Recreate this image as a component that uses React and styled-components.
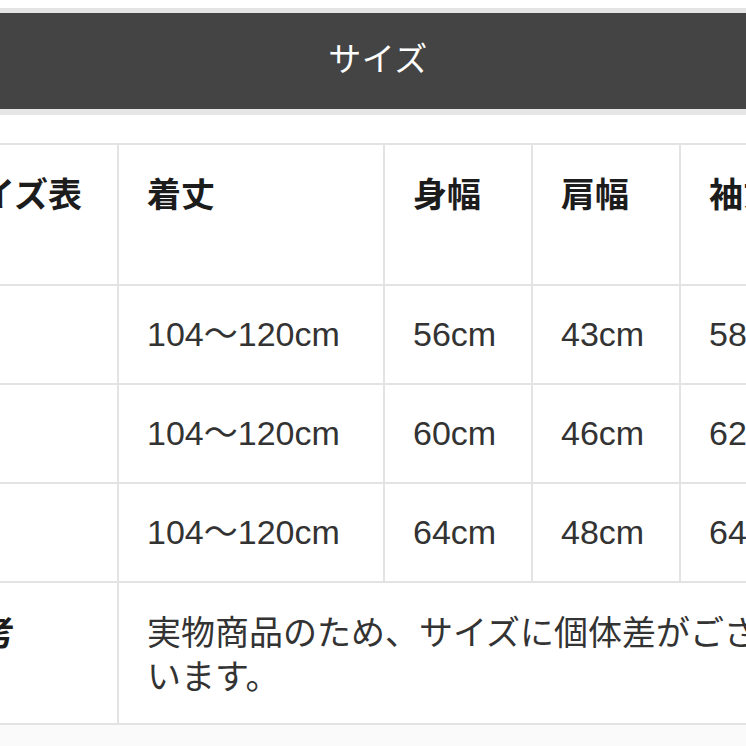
import React from "react";
import styled, { createGlobalStyle } from "styled-components";

const GlobalStyle = createGlobalStyle`
  html, body {
    margin: 0;
    padding: 0;
    background: #ffffff;
  }
  body {
    font-family: "Liberation Sans", "Noto Sans CJK JP", sans-serif;
    overflow: hidden;
  }
`;

const Page = styled.div`
  width: 746px;
  height: 746px;
  overflow: hidden;
  padding-top: 8px;
  box-sizing: border-box;
`;

const TitleBar = styled.div`
  border-top: 5px solid #e4e4e4;
  border-bottom: 6px solid #e6e6e6;
  background: #444444;
  height: 96px;
  box-sizing: content-box;
  display: flex;
  align-items: center;
  justify-content: center;
  padding-left: 10px;
  color: #ffffff;
  font-family: "Noto Sans CJK JP", sans-serif;
  font-size: 33px;
  font-weight: 400;
  letter-spacing: 0.5px;
`;

const TitleText = styled.span`
  position: relative;
  top: -4px;
`;

const TableArea = styled.div`
  margin-top: 28px;
  margin-left: -83px;
`;

const Table = styled.table`
  border-collapse: collapse;
  table-layout: fixed;
  width: 910px;
`;

const Cell = styled.td`
  border: 2px solid #e3e3e3;
  padding: 26px 28px;
  vertical-align: top;
  font-size: 34px;
  line-height: 44px;
  color: ${(p) => (p.$head ? "#1c1c1c" : "#333333")};
  font-weight: ${(p) => (p.$head ? 700 : 400)};
  font-family: ${(p) =>
    p.$head
      ? `"Noto Sans CJK JP", sans-serif`
      : `"Liberation Sans", "Noto Sans CJK JP", sans-serif`};
  white-space: nowrap;
`;

const HeadRow = styled.tr`
  height: 141px;
`;

const DataRow = styled.tr`
  height: 99px;
`;

const Remark = styled.div`
  max-width: 620px;
  white-space: normal;
  line-height: 44px;
  font-family: "Noto Sans CJK JP", sans-serif;
  color: #333333;
`;

const BottomBand = styled.div`
  height: 30px;
  background: #fafafa;
`;

const headers = ["サイズ表", "着丈", "身幅", "肩幅", "袖丈"];
const rows = [
  ["M", "104〜120cm", "56cm", "43cm", "58cm"],
  ["L", "104〜120cm", "60cm", "46cm", "62cm"],
  ["XL", "104〜120cm", "64cm", "48cm", "64cm"],
];

export default function App() {
  return (
    <>
      <GlobalStyle />
      <Page>
        <TitleBar>
          <TitleText>サイズ</TitleText>
        </TitleBar>
        <TableArea>
          <Table>
            <colgroup>
              <col style={{ width: 200 }} />
              <col style={{ width: 266 }} />
              <col style={{ width: 148 }} />
              <col style={{ width: 148 }} />
              <col style={{ width: 148 }} />
            </colgroup>
            <tbody>
              <HeadRow>
                {headers.map((h) => (
                  <Cell key={h} $head>
                    {h}
                  </Cell>
                ))}
              </HeadRow>
              {rows.map((r) => (
                <DataRow key={r[0]}>
                  <Cell $head>
                    <span style={{ visibility: "hidden" }}>{r[0]}</span>
                  </Cell>
                  {r.slice(1).map((v, i) => (
                    <Cell key={i}>{v}</Cell>
                  ))}
                </DataRow>
              ))}
              <tr>
                <Cell $head>備考</Cell>
                <Cell colSpan={4}>
                  <Remark>実物商品のため、サイズに個体差がございます。</Remark>
                </Cell>
              </tr>
            </tbody>
          </Table>
          <BottomBand />
        </TableArea>
      </Page>
    </>
  );
}
